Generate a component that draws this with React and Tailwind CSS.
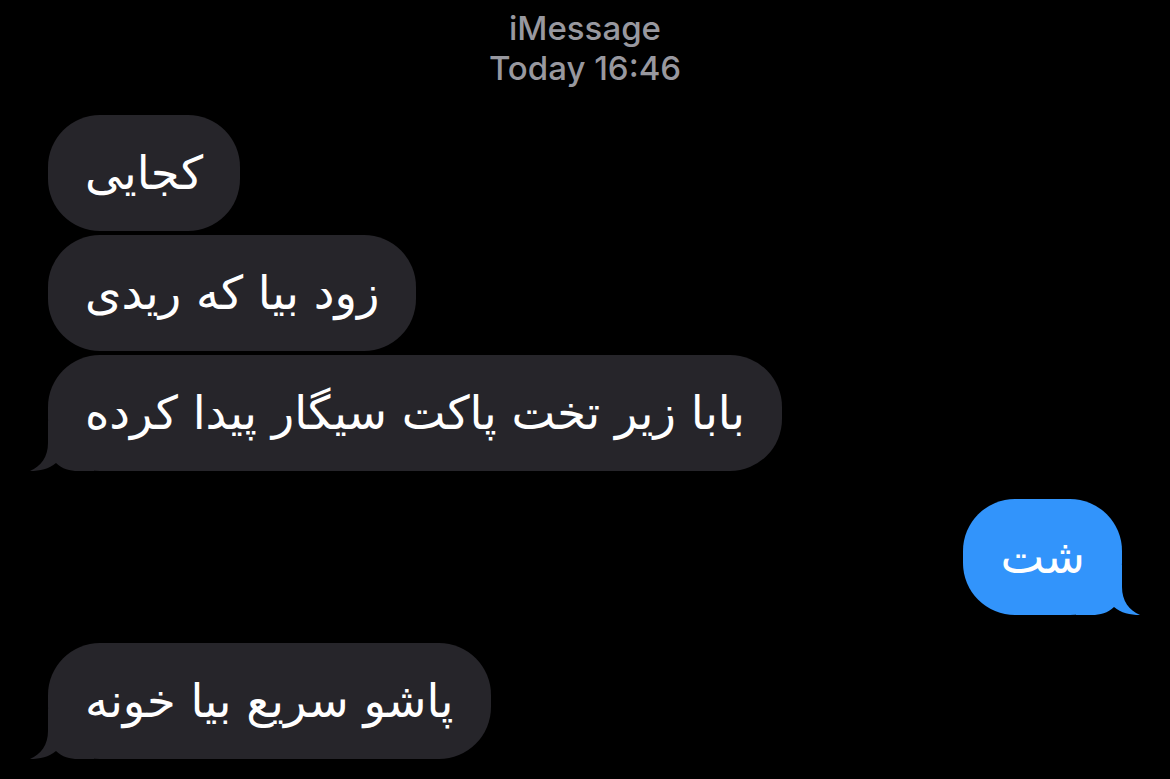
const Tail = ({ color, side }) => (
    <svg
        width="64"
        height="50"
        viewBox="0 0 64 50"
        className={side === 'left' ? 'absolute left-[-18px] bottom-0' : 'absolute right-[-18px] bottom-0 -scale-x-100'}
    >
        <path d="M18 0 L18 22 C18 36 11 45 0 50 C10 50 19 48 26 42 C32 48 40 50 48 50 L64 50 L64 0 Z" fill={color} />
    </svg>
);

const Bubble = ({ text, mine, tail }) => (
    <div className={`relative h-[116px] flex items-center px-[37px] rounded-[52px] ${mine ? 'bg-[#3294fb]' : 'bg-[#26252a]'}`}>
        {tail && <Tail side={mine ? 'right' : 'left'} color={mine ? '#3294fb' : '#26252a'} />}
        <span
            dir="rtl"
            className="relative text-white text-[46.5px] leading-[56px] whitespace-nowrap"
            style={{ fontFamily: '"DejaVu Sans", "Noto Sans", sans-serif' }}
        >
            {text}
        </span>
    </div>
);

export default function App() {
    return (
        <div className="w-[1170px] h-[779px] bg-black overflow-hidden px-[48px] pt-[8px]">
            {/* Header */}
            <div className="text-center text-[#98989f] text-[33px] leading-[40px] font-medium" style={{ fontFamily: 'Inter, sans-serif' }}>
                <div>iMessage</div>
                <div>Today 16:46</div>
            </div>

            <div className="mt-[27px] flex flex-col items-start gap-[4px]">
                <Bubble text="کجایی" />
                <Bubble text="زود بیا که ریدی" />
                <Bubble text="بابا زیر تخت پاکت سیگار پیدا کرده" tail />
            </div>

            <div className="mt-[28px] flex justify-end">
                <Bubble text="شت" mine tail />
            </div>

            <div className="mt-[28px] flex">
                <Bubble text="پاشو سریع بیا خونه" tail />
            </div>
        </div>
    );
}
